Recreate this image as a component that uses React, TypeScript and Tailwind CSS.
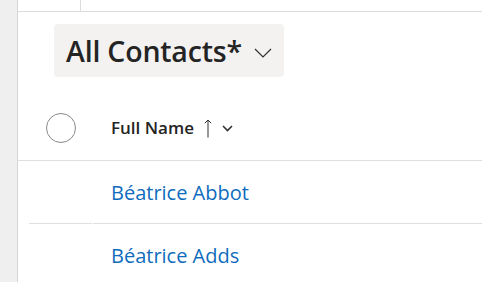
import React from 'react';

const font = { fontFamily: '"Open Sans", "Noto Sans", sans-serif' };

const rows = ['Béatrice Abbot', 'Béatrice Adds'];

const App: React.FC = () => {
  return (
    <div className="flex h-[282px] w-[482px] overflow-hidden bg-white text-[#242424]" style={font}>
      {/* left rail */}
      <div className="w-[18px] shrink-0 border-r border-[#d6d6d6] bg-[#efefef]" />

      <div className="flex min-w-0 flex-1 flex-col">
        {/* top bar */}
        <div className="flex h-[12px] shrink-0 border-b border-[#dcdcdc]">
          <div className="w-[63px] border-r border-[#dcdcdc]" />
        </div>

        {/* view selector */}
        <div className="mt-[12px] pl-[36px]">
          <button className="flex h-[53px] w-[230px] items-center rounded-[4px] bg-[#f3f2f1] pl-[12px]">
            <span className="mt-[2px] text-[28.5px] font-semibold leading-none tracking-[-0.2px]">All Contacts*</span>
            <svg className="ml-[12px] mt-[5px]" width="18" height="10" viewBox="0 0 18 10" fill="none">
              <path d="M1 1l8 8 8-8" stroke="#323130" strokeWidth="1.2" />
            </svg>
          </button>
        </div>

        {/* column header */}
        <div className="mt-[19px] flex h-[65px] shrink-0 items-center border-b border-[#e0e0e0]">
          <div className="flex w-[75px] justify-center pl-[11px]">
            <div className="h-[30px] w-[30px] rounded-full border border-[#8a8886]" />
          </div>
          <div className="flex items-center pl-[18px]">
            <span className="text-[17px] font-semibold">Full Name</span>
            <svg className="ml-[10px]" width="8" height="19" viewBox="0 0 8 19" fill="none">
              <path d="M4 18.5V1M0.8 4.2L4 1l3.2 3.2" stroke="#323130" strokeWidth="1" />
            </svg>
            <svg className="ml-[10px] mt-[1px]" width="11" height="7" viewBox="0 0 11 7" fill="none">
              <path d="M1 1l4.5 4.5L10 1" stroke="#323130" strokeWidth="1.6" />
            </svg>
          </div>
        </div>

        {/* rows */}
        {rows.map((name) => (
          <div key={name} className="flex h-[63px] shrink-0 pl-[11px]">
            <div className="w-[63px] border-b border-[#e0e0e0]" />
            <div className="ml-[1px] flex flex-1 items-center border-b border-[#e0e0e0] pl-[18px]">
              <span className="mt-[2px] text-[20px] text-[#0f6cbd]">{name}</span>
            </div>
          </div>
        ))}
      </div>
    </div>
  );
};

export default App;
